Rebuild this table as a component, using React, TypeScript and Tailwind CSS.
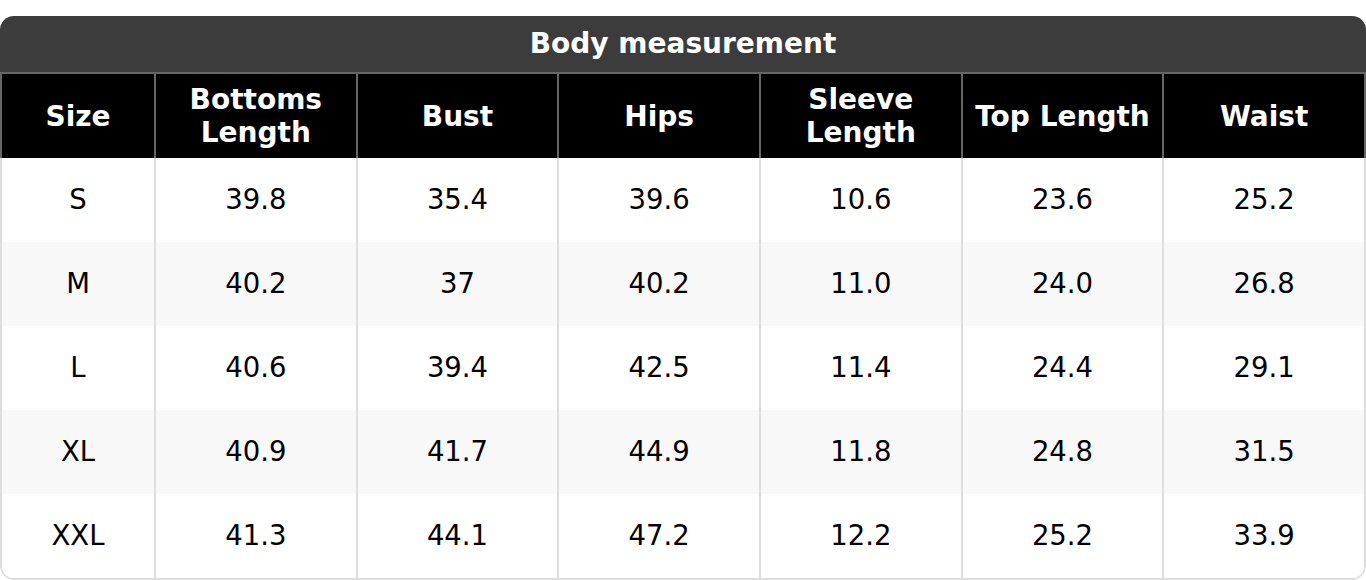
const columns = ["Size", "Bottoms Length", "Bust", "Hips", "Sleeve Length", "Top Length", "Waist"];

const headerLabels: string[][] = [
  ["Size"],
  ["Bottoms", "Length"],
  ["Bust"],
  ["Hips"],
  ["Sleeve", "Length"],
  ["Top Length"],
  ["Waist"],
];

const rows = [
  ["S", "39.8", "35.4", "39.6", "10.6", "23.6", "25.2"],
  ["M", "40.2", "37", "40.2", "11.0", "24.0", "26.8"],
  ["L", "40.6", "39.4", "42.5", "11.4", "24.4", "29.1"],
  ["XL", "40.9", "41.7", "44.9", "11.8", "24.8", "31.5"],
  ["XXL", "41.3", "44.1", "47.2", "12.2", "25.2", "33.9"],
];

export default function App() {
  return (
    <div className="w-[1366px] h-[580px] bg-white pt-[16px] font-['DejaVu_Sans',sans-serif] text-[27.5px]">
      <div className="rounded-[14px] overflow-hidden">
        {/* Title */}
        <div className="h-[58px] bg-[#3c3c3c] text-white font-bold text-[28px] flex items-center justify-center border-b-2 border-[#666]">
          Body measurement
        </div>

        {/* Header */}
        <div className="grid grid-cols-[152px_repeat(6,1fr)] bg-black text-white font-bold text-[28px] border-x-2 border-[#666]">
          {headerLabels.map((lines, i) => (
            <div
              key={columns[i]}
              className={`h-[84px] flex flex-col items-center justify-center text-center leading-[33px] ${
                i > 0 ? "border-l-2 border-[#666]" : ""
              }`}
            >
              {lines.map((l) => (
                <span key={l}>{l}</span>
              ))}
            </div>
          ))}
        </div>

        {/* Body */}
        <div className="border-x-2 border-b-2 border-[#ddd] rounded-b-[14px] overflow-hidden text-black">
          {rows.map((row, r) => (
            <div
              key={row[0]}
              className={`grid grid-cols-[152px_repeat(6,1fr)] ${r % 2 === 1 ? "bg-[#f8f8f8]" : "bg-white"}`}
            >
              {row.map((cell, i) => (
                <div
                  key={i}
                  className={`h-[84px] flex items-center justify-center ${i > 0 ? "border-l-2 border-[#ddd]" : ""}`}
                >
                  {cell}
                </div>
              ))}
            </div>
          ))}
        </div>
      </div>
    </div>
  );
}
